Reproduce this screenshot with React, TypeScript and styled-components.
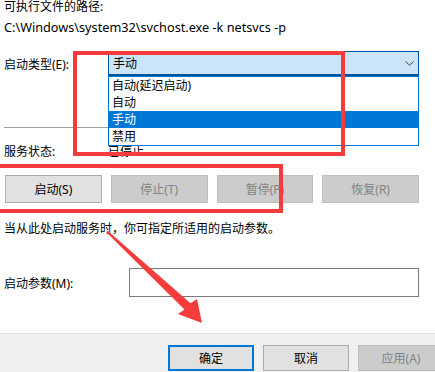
import React from "react";
import styled, { createGlobalStyle } from "styled-components";

const RED = "#f43c3c";

const GlobalStyle = createGlobalStyle`
  html, body {
    margin: 0;
    padding: 0;
    background: #ffffff;
  }
  body {
    font-family: "Noto Sans", "Noto Sans CJK SC", sans-serif;
    font-size: 12px;
    color: #000000;
  }
`;

type BtnProps = {
  $disabled?: boolean;
  $primary?: boolean;
};

export default function App() {
  return (
    <Page>
      <GlobalStyle />
      <Content>
        <Line>可执行文件的路径:</Line>
        <PathLine>C:\Windows\system32\svchost.exe -k netsvcs -p</PathLine>

        <FieldRow>
          <FieldLabel>启动类型(E):</FieldLabel>
          <ComboWrap>
            <Combo>
              <span>手动</span>
              <svg width="9" height="5" viewBox="0 0 9 5">
                <path d="M0.5 0.5 L4.5 4.2 L8.5 0.5" fill="none" stroke="#444" strokeWidth="1" />
              </svg>
            </Combo>
            <DropList>
              <DropItem>自动(延迟启动)</DropItem>
              <DropItem>自动</DropItem>
              <DropItem $selected>手动</DropItem>
              <DropItem>禁用</DropItem>
            </DropList>
          </ComboWrap>
        </FieldRow>

        <Separator />

        <StatusRow>
          <FieldLabel>服务状态:</FieldLabel>
          <StatusValue>已停止</StatusValue>
        </StatusRow>

        <ButtonRow>
          <ActionButton>启动(S)</ActionButton>
          <ActionButton $disabled>停止(T)</ActionButton>
          <ActionButton $disabled>暂停(P)</ActionButton>
          <ActionButton $disabled>恢复(R)</ActionButton>
        </ButtonRow>

        <HintLine>当从此处启动服务时，你可指定所适用的启动参数。</HintLine>

        <ParamRow>
          <FieldLabel>启动参数(M):</FieldLabel>
          <ParamInput />
        </ParamRow>
      </Content>

      <Footer>
        <FooterButton $primary>确定</FooterButton>
        <FooterButton>取消</FooterButton>
        <FooterButton $disabled>应用(A)</FooterButton>
      </Footer>

      <RedFrame style={{ left: 73, top: 51, width: 272, height: 105 }} />
      <RedFrame style={{ left: -10, top: 164, width: 293, height: 49 }} />

      <Annotation width="435" height="372" viewBox="0 0 435 372">
        <polygon
          points="106,232 108,231 190.5,303.2 197,299 202,323 178,314 184.5,309.6"
          fill={RED}
        />
      </Annotation>
    </Page>
  );
}

const Page = styled.div`
  position: relative;
  width: 435px;
  height: 372px;
  overflow: hidden;
  background: #ffffff;
  display: flex;
  flex-direction: column;
`;

const Content = styled.div`
  flex: 1;
  display: flex;
  flex-direction: column;
  padding: 0 16px 0 4px;
`;

const Line = styled.div`
  height: 14px;
  line-height: 14px;
  white-space: nowrap;
`;

const PathLine = styled(Line)`
  margin-top: 6px;
  font-size: 12.7px;
`;

const HintLine = styled(Line)`
  margin-top: 19px;
`;

const FieldRow = styled.div`
  display: flex;
  align-items: center;
  margin-top: 17px;
  height: 25px;
`;

const FieldLabel = styled.div`
  width: 104px;
  flex-shrink: 0;
  white-space: nowrap;
`;

const ComboWrap = styled.div`
  position: relative;
  flex: 1;
  height: 100%;
`;

const Combo = styled.div`
  box-sizing: border-box;
  height: 25px;
  display: flex;
  align-items: center;
  justify-content: space-between;
  padding: 0 4px 0 4px;
  background: #cce4f7;
  border: 1px solid #005499;
  border-bottom-width: 2px;
`;

const DropList = styled.div`
  position: absolute;
  top: 25px;
  left: 0;
  right: 0;
  box-sizing: border-box;
  background: #ffffff;
  border: 1px solid #0078d7;
  z-index: 2;
`;

const DropItem = styled.div<{ $selected?: boolean }>`
  height: 17px;
  line-height: 17px;
  padding-left: 3px;
  background: ${(p) => (p.$selected ? "#0078d7" : "#ffffff")};
  color: ${(p) => (p.$selected ? "#ffffff" : "#000000")};
`;

const Separator = styled.div`
  margin-top: 51px;
  height: 1px;
  background: #a0a0a0;
`;

const StatusRow = styled.div`
  display: flex;
  align-items: center;
  margin-top: 15px;
  height: 16px;
`;

const StatusValue = styled.div`
  white-space: nowrap;
`;

const ButtonRow = styled.div`
  display: grid;
  grid-template-columns: repeat(4, 1fr);
  column-gap: 9px;
  margin-top: 16px;
  padding-left: 1px;
`;

const ActionButton = styled.div<BtnProps>`
  box-sizing: border-box;
  height: 28px;
  display: flex;
  align-items: center;
  justify-content: center;
  background: ${(p) => (p.$disabled ? "#cccccc" : "#e1e1e1")};
  border: 1px solid ${(p) => (p.$disabled ? "#bfbfbf" : "#adadad")};
  color: ${(p) => (p.$disabled ? "#838383" : "#000000")};
`;

const ParamRow = styled.div`
  display: flex;
  align-items: center;
  margin-top: 32px;
  height: 29px;
`;

const ParamInput = styled.div`
  box-sizing: border-box;
  margin-left: 21px;
  flex: 1;
  height: 29px;
  border: 1px solid #7a7a7a;
  background: #ffffff;
`;

const Footer = styled.div`
  box-sizing: border-box;
  height: 39px;
  display: flex;
  gap: 9px;
  padding: 11px 0 0 168px;
  background: #f0f0f0;
  border-top: 1px solid #dfdfdf;
`;

const FooterButton = styled.div<BtnProps>`
  box-sizing: border-box;
  flex-shrink: 0;
  width: 86px;
  height: 26px;
  display: flex;
  align-items: center;
  justify-content: center;
  background: ${(p) => (p.$disabled ? "#cccccc" : "#e1e1e1")};
  border: ${(p) =>
    p.$primary ? "2px solid #0078d7" : p.$disabled ? "1px solid #bfbfbf" : "1px solid #adadad"};
  color: ${(p) => (p.$disabled ? "#838383" : "#000000")};
`;

const RedFrame = styled.div`
  position: absolute;
  box-sizing: border-box;
  border: 4px solid ${RED};
  pointer-events: none;
  z-index: 3;
`;

const Annotation = styled.svg`
  position: absolute;
  left: 0;
  top: 0;
  pointer-events: none;
  z-index: 4;
`;
